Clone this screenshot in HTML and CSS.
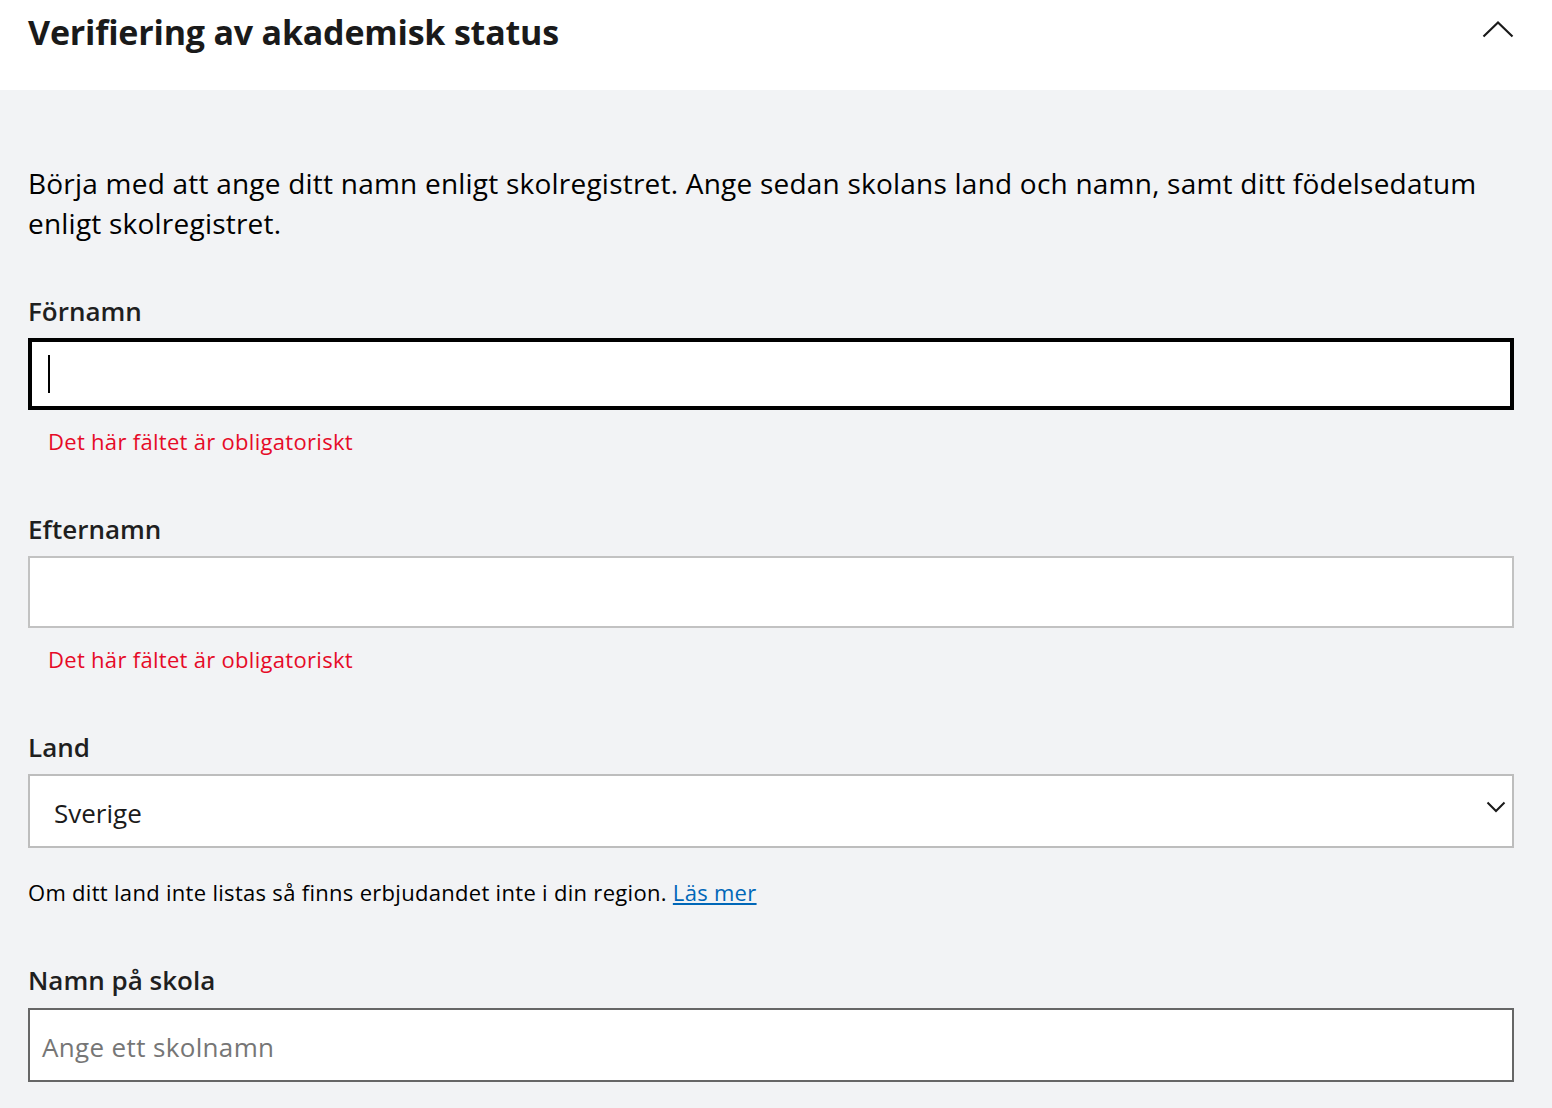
FILE: index.html
```html
<!DOCTYPE html>
<html lang="sv">
<head>
<meta charset="utf-8">
<title>Verifiering av akademisk status</title>
<link rel="stylesheet" href="styles.css">
</head>
<body>
<div class="panel">
  <header class="panel-header">
    <h1 class="panel-title">Verifiering av akademisk status</h1>
    <button class="collapse-btn" aria-label="Dölj">
      <svg width="32" height="18" viewBox="0 0 32 18"><path d="M1.5 16.5 L16 2.5 L30.5 16.5" fill="none" stroke="#1a1a1a" stroke-width="2.2"/></svg>
    </button>
  </header>
  <section class="panel-body">
    <p class="intro">Börja med att ange ditt namn enligt skolregistret. Ange sedan skolans land och namn, samt ditt födelsedatum enligt skolregistret.</p>

    <div class="field">
      <label class="field-label">Förnamn</label>
      <div class="text-input focused"><span class="caret"></span></div>
      <div class="field-error">Det här fältet är obligatoriskt</div>
    </div>

    <div class="field">
      <label class="field-label">Efternamn</label>
      <div class="text-input"></div>
      <div class="field-error">Det här fältet är obligatoriskt</div>
    </div>

    <div class="field">
      <label class="field-label">Land</label>
      <div class="select-input">
        <span class="select-value">Sverige</span>
        <svg class="select-chevron" width="20" height="12" viewBox="0 0 20 12"><path d="M1.5 1.5 L10 10 L18.5 1.5" fill="none" stroke="#1a1a1a" stroke-width="2"/></svg>
      </div>
      <p class="field-note">Om ditt land inte listas så finns erbjudandet inte i din region. <a href="#" class="link">Läs mer</a></p>
    </div>

    <div class="field">
      <label class="field-label">Namn på skola</label>
      <div class="text-input dark"><span class="placeholder">Ange ett skolnamn</span></div>
    </div>
  </section>
</div>
</body>
</html>
```

FILE: styles.css
```css
* { box-sizing: border-box; }
html, body { margin: 0; padding: 0; }
body {
  font-family: "Open Sans", "Noto Sans", "Liberation Sans", sans-serif;
  color: #000;
  background: #f2f3f5;
}
.panel-header {
  background: #fff;
  height: 90px;
  display: flex;
  align-items: flex-start;
  justify-content: space-between;
  padding: 0 38px 0 28px;
}
.panel-title {
  margin: 10px 0 0;
  font-size: 34px;
  font-weight: 700;
  line-height: 44px;
  color: #1a1a1a;
  letter-spacing: -0.2px;
}
.collapse-btn {
  margin-top: 20px;
  background: none;
  border: 0;
  padding: 0;
  width: 32px;
  height: 18px;
  display: block;
}
.collapse-btn svg { display: block; }
.panel-body {
  padding: 73px 38px 0 28px;
}
.intro {
  margin: 0;
  font-size: 28px;
  line-height: 40px;
  letter-spacing: 0.22px;
  color: #000;
}
.field-label {
  display: block;
  font-size: 26px;
  font-weight: 600;
  line-height: 36px;
  color: #1f1f1f;
}
.intro + .field .field-label { margin-top: 50px; }
.text-input, .select-input {
  margin-top: 9px;
  height: 72px;
  background: #fff;
  border: 2px solid #c2c2c2;
  display: flex;
  align-items: center;
}
.text-input.focused { border: 4px solid #000; padding-left: 16px; }
.text-input.dark { border-color: #666; height: 74px; padding-left: 12px; margin-top: 10px; }
.caret {
  display: block;
  width: 2px;
  height: 38px;
  background: #000;
}
.placeholder {
  font-size: 26px;
  color: #767676;
  letter-spacing: 0.35px;
  padding-top: 4px;
}
.field-error {
  margin: 15px 0 54px 20px;
  font-size: 22px;
  line-height: 32px;
  color: #e60a27;
  letter-spacing: 0.3px;
}
.select-input {
  height: 74px;
  justify-content: space-between;
  padding: 0 6px 2px 24px;
  border-color: #bdbdbd;
}
.select-value {
  font-size: 26px;
  color: #1a1a1a;
  padding-top: 6px;
}
.select-chevron { margin-top: -6px; }
.field-note {
  margin: 28px 0 54px;
  font-size: 22px;
  line-height: 32px;
  color: #000;
  letter-spacing: 0.3px;
}
.link { color: #0067b8; text-decoration: underline; }
```
